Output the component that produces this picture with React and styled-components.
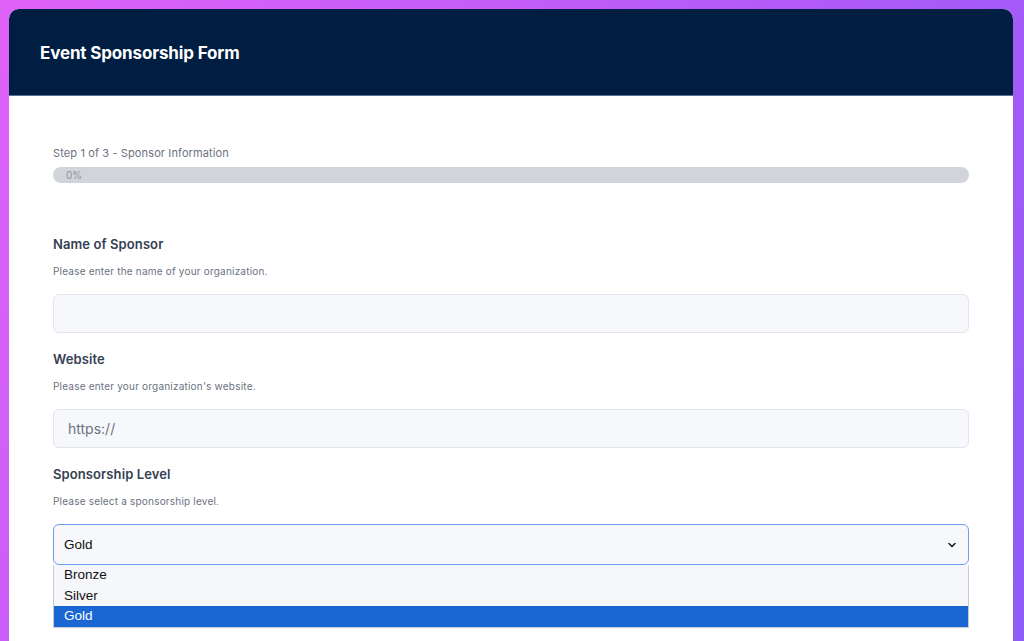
import styled, { createGlobalStyle } from 'styled-components';

const GlobalStyle = createGlobalStyle`
  html, body {
    margin: 0;
    padding: 0;
  }
  body {
    font-family: Inter, "Noto Sans", sans-serif;
    overflow: hidden;
  }
`;

const Page = styled.div`
  min-height: 100vh;
  box-sizing: border-box;
  padding: 9px 11px 0 9px;
  background: linear-gradient(120deg, #e062f8 0%, #b25af8 55%, #8b5cf6 100%);
`;

const Card = styled.div`
  background: #fff;
  border-radius: 10px 10px 0 0;
  overflow: hidden;
  min-height: 700px;
`;

const Header = styled.header`
  height: 87px;
  background: #001d42;
  display: flex;
  align-items: center;
  padding: 2px 0 0 31px;
  border-bottom: 1px solid #5a6f8c;
  box-sizing: border-box;
`;

const Title = styled.h1`
  margin: 0;
  color: #fff;
  font-size: 17px;
  font-weight: 700;
  letter-spacing: -0.15px;
`;

const Body = styled.div`
  padding: 50px 44px 0;
`;

const StepText = styled.div`
  font-size: 11px;
  letter-spacing: 0.12px;
  color: #6b7280;
  line-height: 14px;
`;

const Progress = styled.div`
  margin-top: 7px;
  height: 16px;
  border-radius: 8px;
  background: #d1d5db;
  display: flex;
  align-items: center;
  padding-left: 13px;
  font-size: 10px;
  color: #8a9099;
`;

const Fields = styled.div`
  margin-top: 53px;
  display: flex;
  flex-direction: column;
  gap: 18px;
`;

const Field = styled.div`
  display: flex;
  flex-direction: column;
  position: relative;
`;

const Label = styled.label`
  font-size: 13px;
  font-weight: 600;
  letter-spacing: 0.1px;
  color: #354052;
  line-height: 16px;
`;

const Help = styled.div`
  margin-top: 13px;
  font-size: 10px;
  letter-spacing: 0.2px;
  color: #6b7280;
  line-height: 13px;
`;

const Input = styled.input`
  margin-top: 16px;
  height: 39px;
  box-sizing: border-box;
  border: 1px solid #e2e5ec;
  border-radius: 6px;
  background: #f7f8fb;
  padding: 0 14px;
  font-family: Inter, sans-serif;
  font-size: 14px;
  color: #374151;
  outline: none;

  &::placeholder {
    color: #6b7280;
  }
`;

const Select = styled.div`
  margin-top: 16px;
  height: 41px;
  box-sizing: border-box;
  border: 1px solid #6f9bef;
  border-radius: 6px;
  background: #f7f8fb;
  padding: 0 11px 0 10px;
  display: flex;
  align-items: center;
  justify-content: space-between;
  font-family: "Liberation Sans", Arial, sans-serif;
  font-size: 13.5px;
  color: #111;
`;

const OptionList = styled.ul`
  position: absolute;
  left: 0;
  right: 0;
  top: 100%;
  margin: 0;
  padding: 0;
  list-style: none;
  background: #f6f7fb;
  border: 1px solid #c9ccd3;
  border-top: none;
  font-family: "Liberation Sans", Arial, sans-serif;
  font-size: 13.5px;
  z-index: 2;
`;

const Option = styled.li`
  height: 20.5px;
  line-height: 20.5px;
  padding-left: 10px;
  color: ${p => (p.$selected ? '#fff' : '#111')};
  background: ${p => (p.$selected ? '#1a66d2' : 'transparent')};
`;

const Chevron = () => (
  <svg width="10" height="10" viewBox="0 0 10 10">
    <path d="M2 3.5 L5 6.5 L8 3.5" fill="none" stroke="#222" strokeWidth="1.6" strokeLinecap="round" strokeLinejoin="round" />
  </svg>
);

const levels = ['Bronze', 'Silver', 'Gold'];

export default function App() {
  return (
    <>
      <GlobalStyle />
      <Page>
        <Card>
          <Header>
            <Title>Event Sponsorship Form</Title>
          </Header>
          <Body>
            <StepText>Step 1 of 3 - Sponsor Information</StepText>
            <Progress>0%</Progress>
            <Fields>
              <Field>
                <Label>Name of Sponsor</Label>
                <Help>Please enter the name of your organization.</Help>
                <Input type="text" />
              </Field>
              <Field>
                <Label>Website</Label>
                <Help>Please enter your organization's website.</Help>
                <Input type="text" placeholder="https://" />
              </Field>
              <Field>
                <Label>Sponsorship Level</Label>
                <Help>Please select a sponsorship level.</Help>
                <Field>
                  <Select>
                    <span>Gold</span>
                    <Chevron />
                  </Select>
                  <OptionList>
                    {levels.map(l => (
                      <Option key={l} $selected={l === 'Gold'}>{l}</Option>
                    ))}
                  </OptionList>
                </Field>
              </Field>
            </Fields>
          </Body>
        </Card>
      </Page>
    </>
  );
}
